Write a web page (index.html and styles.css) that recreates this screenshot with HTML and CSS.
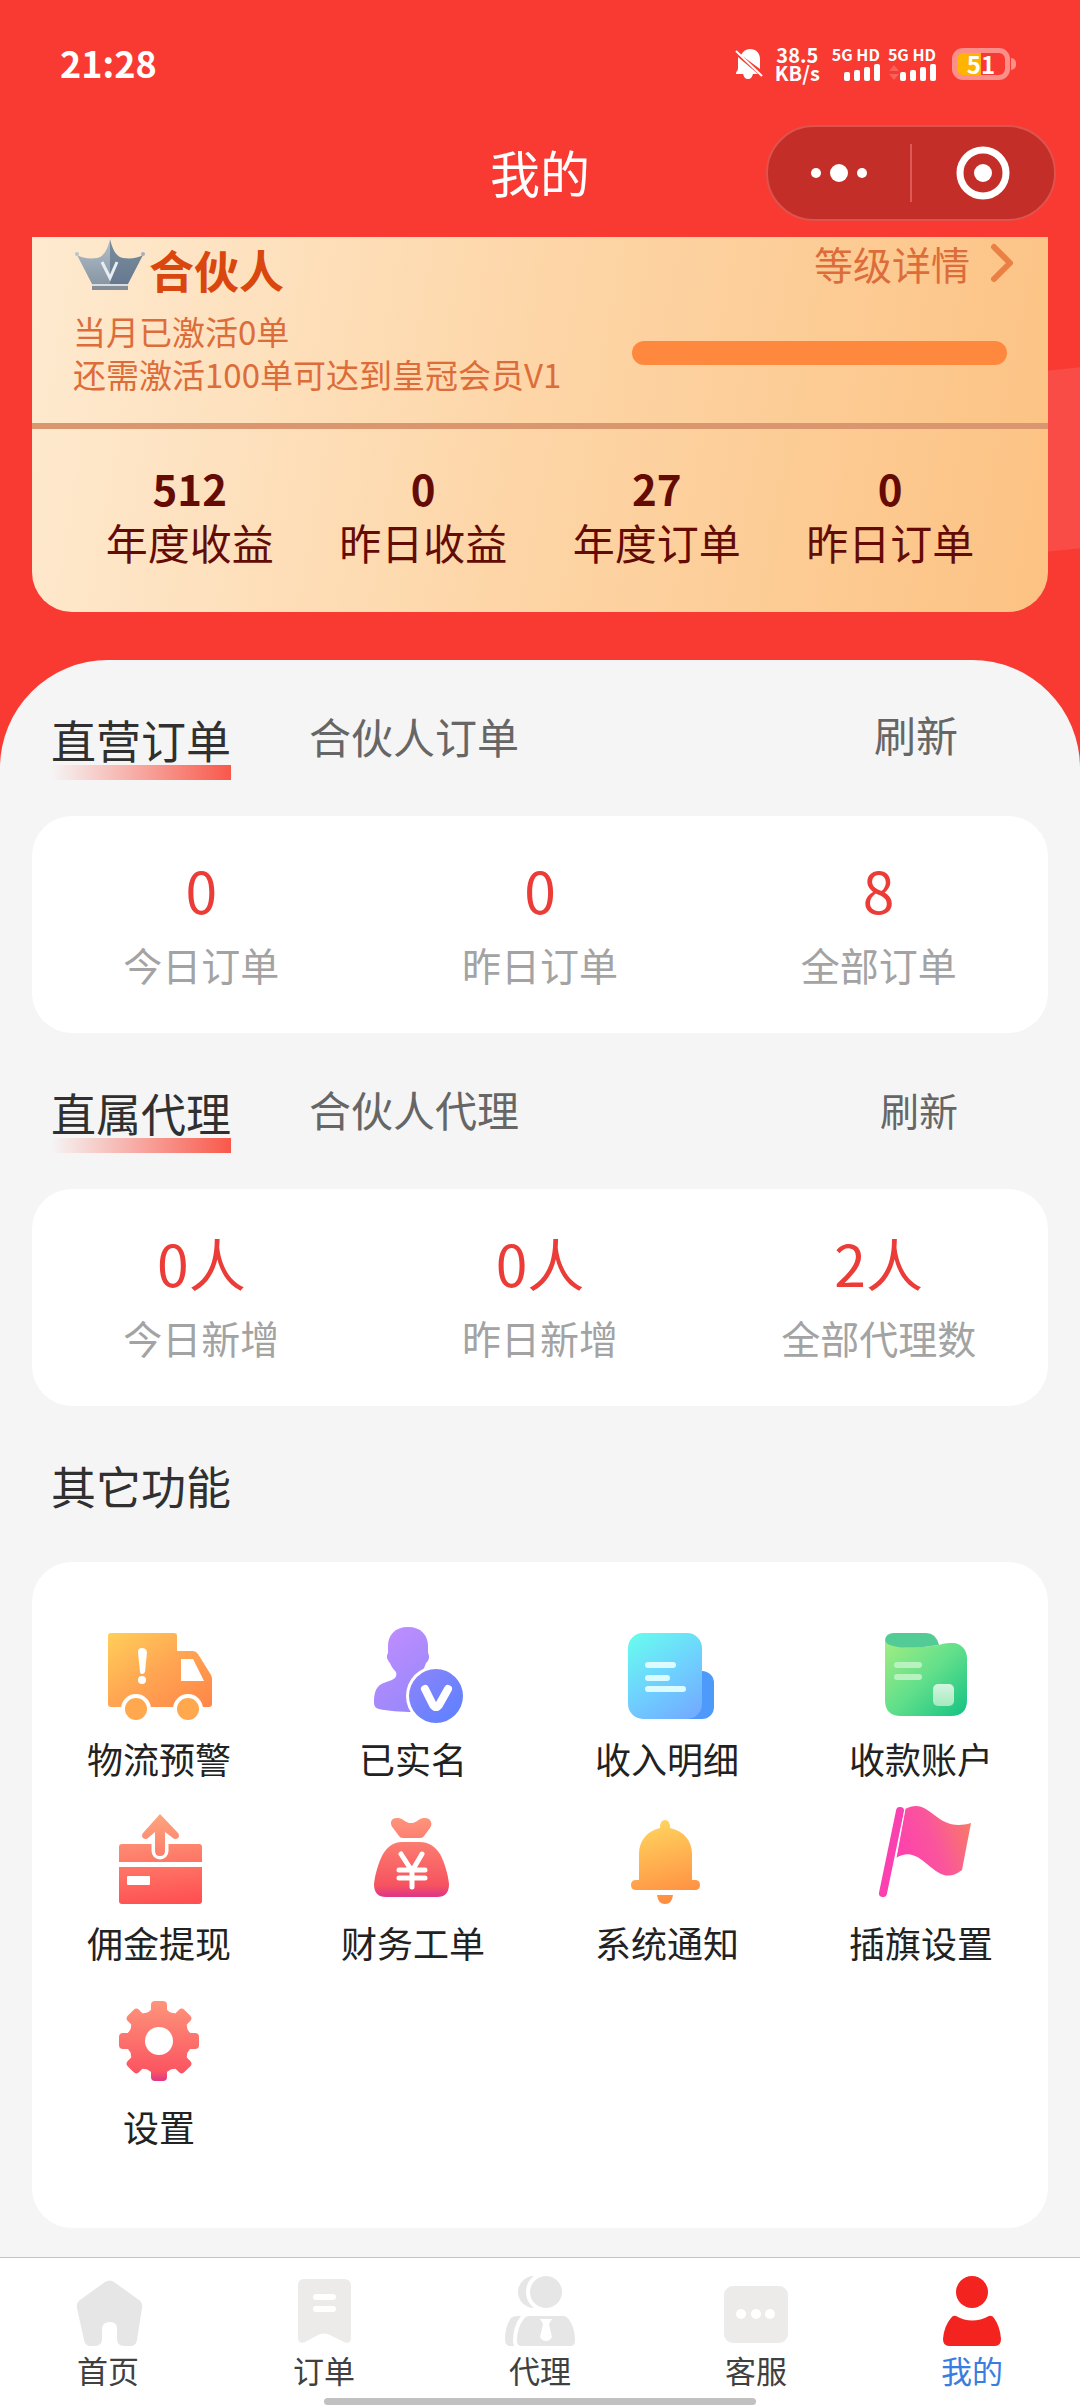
FILE: index.html
```html
<!DOCTYPE html>
<html lang="zh-CN">
<head>
	<meta charset="UTF-8">
	<meta name="viewport" content="width=device-width, initial-scale=1">
	<title>我的</title>
	<link rel="stylesheet" href="styles.css">
</head>
<body>
<div class="page">
	<header class="top">
		<div class="status">
			<span class="time">21:28</span>
			<div class="status-right">
				<svg class="mute" width="28" height="32" viewBox="0 0 28 32">
					<path d="M6 7C8 3 11 1 15 1c6 0 10 4 10 10v10zM3 9l20 17h-5c-1 3-2 5-5 5s-4-2-5-5H1c0-3 2-3 2-6z" fill="#fff"/>
					<path d="M1 3l26 25" stroke="#fff" stroke-width="2"/>
				</svg>
				<div class="speed"><span>38.5</span><span>KB/s</span></div>
				<div class="signal">
					<span>5G HD</span>
					<svg width="36" height="17" viewBox="0 0 36 17" fill="#fff">
						<rect x="0" y="8" width="6" height="9" rx="2"/><rect x="10" y="6" width="6" height="11" rx="2"/>
						<rect x="20" y="3" width="6" height="14" rx="2"/><rect x="30" y="0" width="6" height="17" rx="2"/>
					</svg>
				</div>
				<div class="signal">
					<span>5G HD</span>
					<svg width="48" height="17" viewBox="0 0 48 17" fill="#fff">
						<path d="M1 7l5-6 5 6zM1 10h10l-5 6z" opacity=".2"/>
						<rect x="12" y="8" width="6" height="9" rx="2"/><rect x="22" y="6" width="6" height="11" rx="2"/>
						<rect x="32" y="3" width="6" height="14" rx="2"/><rect x="42" y="0" width="6" height="17" rx="2"/>
					</svg>
				</div>
				<div class="battery"><span>51</span></div>
			</div>
		</div>
		<div class="nav">
			<h1>我的</h1>
			<div class="capsule">
				<button type="button" aria-label="更多">
					<svg width="58" height="20" viewBox="0 0 58 20" fill="#fff"><circle cx="6" cy="10" r="5"/><circle cx="29" cy="10" r="9"/><circle cx="52" cy="10" r="5"/></svg>
				</button>
				<button type="button" aria-label="关闭">
					<svg width="54" height="54" viewBox="0 0 54 54"><circle cx="27" cy="27" r="23" fill="none" stroke="#fff" stroke-width="7"/><circle cx="27" cy="27" r="9" fill="#fff"/></svg>
				</button>
			</div>
		</div>
	</header>

	<section class="level">
		<div class="level-top">
			<div class="level-info">
				<div class="level-name">
					<svg width="70" height="54" viewBox="0 0 70 54">
						<defs>
							<linearGradient id="cl" x1="0" y1="0" x2="0" y2="1"><stop offset="0" stop-color="#b3c0ca"/><stop offset="1" stop-color="#8896a5"/></linearGradient>
							<linearGradient id="cr" x1="0" y1="0" x2="0" y2="1"><stop offset="0" stop-color="#7a8da0"/><stop offset="1" stop-color="#66798e"/></linearGradient>
						</defs>
						<path d="M35 0C33 9 29 18 22 19 14 20 7 19 2 16L17 45H35z" fill="url(#cl)"/>
						<path d="M35 0c2 9 6 18 13 19 8 1 15 0 20-3L53 45H35z" fill="url(#cr)"/>
						<circle cx="2" cy="15" r="2" fill="#bac3cb"/><circle cx="68" cy="15" r="2" fill="#a5b0bb"/>
						<path d="M27 23l8 16 7-16" fill="none" stroke="#e9edf2" stroke-width="3"/>
						<path d="M17 46h36" stroke="#d9dde0" stroke-width="2"/><path d="M17 49h36" stroke="#858d96" stroke-width="4"/>
					</svg>
					<strong>合伙人</strong>
				</div>
				<p>当月已激活0单</p>
				<p>还需激活100单可达到皇冠会员V1</p>
			</div>
			<div class="level-side">
				<a href="#" class="level-link">等级详情
					<svg width="24" height="40" viewBox="0 0 24 40"><path d="M4 4l16 16L4 36" fill="none" stroke="#ea8044" stroke-width="6" stroke-linecap="round" stroke-linejoin="round"/></svg>
				</a>
				<progress class="bar" value="0" max="100" aria-label="激活进度"></progress>
			</div>
		</div>
		<ul class="income">
			<li><b>512</b><span>年度收益</span></li>
			<li><b>0</b><span>昨日收益</span></li>
			<li><b>27</b><span>年度订单</span></li>
			<li><b>0</b><span>昨日订单</span></li>
		</ul>
	</section>

	<main class="main">
		<div class="head">
			<button type="button" class="tab on">直营订单</button>
			<button type="button" class="tab">合伙人订单</button>
			<button type="button" class="refresh">刷新</button>
		</div>
		<ul class="card count">
			<li><b>0</b><span>今日订单</span></li>
			<li><b>0</b><span>昨日订单</span></li>
			<li><b>8</b><span>全部订单</span></li>
		</ul>

		<div class="head">
			<button type="button" class="tab on">直属代理</button>
			<button type="button" class="tab">合伙人代理</button>
			<button type="button" class="refresh small">刷新</button>
		</div>
		<ul class="card count">
			<li><b>0人</b><span>今日新增</span></li>
			<li><b>0人</b><span>昨日新增</span></li>
			<li><b>2人</b><span>全部代理数</span></li>
		</ul>

		<div class="head"><h2>其它功能</h2></div>
		<nav class="card menu">
			<a href="#">
				<svg viewBox="0 0 108 108">
					<defs><linearGradient id="g1" x1="0" y1="0" x2="1" y2="1"><stop offset="0" stop-color="#ffcf59"/><stop offset=".5" stop-color="#ffa552"/><stop offset="1" stop-color="#ff8548"/></linearGradient></defs>
					<path d="M6 13h63q3 0 3 3v15h16q3 0 5 3l13 21q1 2 1 4v25q0 3-3 3H6q-3 0-3-3V16q0-3 3-3z" fill="url(#g1)"/>
					<path d="M76 39h12l11 22H76z" fill="#fff"/>
					<circle cx="31" cy="89" r="15" fill="#fff"/><circle cx="83" cy="89" r="15" fill="#fff"/>
					<circle cx="31" cy="89" r="11" fill="#ffa84e"/><circle cx="83" cy="89" r="11" fill="#ffa84e"/>
					<path d="M33 32q0-4 4-4t5 4l-2 20q-1 2-3 2t-2-2z" fill="#fff"/><circle cx="37" cy="60" r="4" fill="#fff"/>
				</svg>
				<span>物流预警</span>
			</a>
			<a href="#">
				<svg viewBox="0 0 108 108">
					<defs>
						<linearGradient id="g2" x1="0" y1="0" x2=".5" y2="1"><stop offset="0" stop-color="#c38eff"/><stop offset="1" stop-color="#9b88fb"/></linearGradient>
						<linearGradient id="g3" x1="0" y1="0" x2="1" y2="1"><stop offset="0" stop-color="#8e85fb"/><stop offset="1" stop-color="#5a80ff"/></linearGradient>
					</defs>
					<path d="M49 7c13 0 20 8 20 19v7c2 3 1 8-2 10-2 6-4 9-6 12v32q0 5-6 5c-14 0-26-1-35-3q-5-1-5-6c0-19 8-19 15-22 7-2 8-5 7-9-3-3-5-6-6-9-3-3-4-7-2-10v-7C29 15 36 7 49 7z" fill="url(#g2)"/>
					<circle cx="77" cy="76" r="30" fill="#fff"/><circle cx="77" cy="76" r="27" fill="url(#g3)"/>
					<path d="M66 69l8 16q3 4 6 0l9-16" fill="none" stroke="#fff" stroke-width="8" stroke-linecap="round"/>
				</svg>
				<span>已实名</span>
			</a>
			<a href="#">
				<svg viewBox="0 0 108 108">
					<defs><linearGradient id="g4" x1=".2" y1="0" x2=".8" y2="1"><stop offset="0" stop-color="#68f8f0"/><stop offset=".55" stop-color="#6fceff"/><stop offset="1" stop-color="#72adff"/></linearGradient></defs>
					<rect x="62" y="51" width="39" height="48" rx="12" fill="#4d9afb"/>
					<rect x="15" y="13" width="74" height="86" rx="15" fill="url(#g4)"/>
					<path d="M35 45h25M35 58h19M35 69h35" stroke="#dcfbff" stroke-width="6" stroke-linecap="round"/>
				</svg>
				<span>收入明细</span>
			</a>
			<a href="#">
				<svg viewBox="0 0 108 108">
					<defs>
						<linearGradient id="g5" x1="0" y1="0" x2="1" y2="1"><stop offset="0" stop-color="#a2ee82"/><stop offset=".5" stop-color="#62df8b"/><stop offset="1" stop-color="#13c284"/></linearGradient>
						<linearGradient id="g6" x1="0" y1="0" x2="0" y2="1"><stop offset="0" stop-color="#d2f6df"/><stop offset="1" stop-color="#a6e9c0"/></linearGradient>
					</defs>
					<path d="M18 20c3 8 27 9 54 5 6-2 10-2 14-2 8 0 14 7 14 15v42q0 16-16 16H34q-16 0-16-16z" fill="url(#g5)"/>
					<path d="M18 20q1-7 9-7h32q10 0 13 12c-27 4-53 4-54-5z" fill="#53cb94"/>
					<path d="M30 45h22M30 57h22" stroke="#b8f3bf" stroke-width="6" stroke-linecap="round"/>
					<rect x="66" y="64" width="21" height="22" rx="5" fill="url(#g6)"/>
				</svg>
				<span>收款账户</span>
			</a>
			<a href="#">
				<svg viewBox="0 0 108 108">
					<defs><linearGradient id="g7" gradientUnits="userSpaceOnUse" x1="50" y1="10" x2="60" y2="100"><stop offset="0" stop-color="#fda67f"/><stop offset="1" stop-color="#ff5052"/></linearGradient></defs>
					<path d="M17 40h77q3 0 3 3v15H14V43q0-3 3-3zM14 63h83v34q0 3-3 3H17q-3 0-3-3z" fill="url(#g7)"/>
					<path d="M55 38v9" stroke="#fff" stroke-width="17" stroke-linecap="round"/>
					<path d="M55 10l18 19q2 3 0 5-3 2-5 0l-8-6v19q0 5-5 5t-5-5V28l-7 6q-2 2-5 0-2-2 0-5z" fill="url(#g7)"/>
					<rect x="22" y="72" width="23" height="9" rx="1" fill="#fff"/>
				</svg>
				<span>佣金提现</span>
			</a>
			<a href="#">
				<svg viewBox="0 0 108 108">
					<defs><linearGradient id="g8" gradientUnits="userSpaceOnUse" x1="54" y1="13" x2="54" y2="93"><stop offset="0" stop-color="#fe957b"/><stop offset=".85" stop-color="#f7535f"/><stop offset="1" stop-color="#dd3488"/></linearGradient></defs>
					<path d="M38 14c5-1 8 5 14 5s9-6 14-5c6 0 8 6 5 10l-6 8q-1 2-4 2H44q-3 0-4-2l-6-8c-4-5-2-10 4-10z" fill="url(#g8)"/>
					<path d="M43 38h18c8 0 15 4 20 12 4 7 8 20 9 30q0 13-12 13H27q-12 0-12-13c1-10 5-23 9-30 5-8 11-12 19-12z" fill="url(#g8)"/>
					<path d="M42 50l11 17 10-17M53 66v17M40 66h26M40 74h26" fill="none" stroke="#fff" stroke-width="5" stroke-linecap="round"/>
				</svg>
				<span>财务工单</span>
			</a>
			<a href="#">
				<svg viewBox="0 0 108 108">
					<defs><linearGradient id="g9" gradientUnits="userSpaceOnUse" x1="40" y1="16" x2="62" y2="100"><stop offset="0" stop-color="#ffd55f"/><stop offset="1" stop-color="#ff8a40"/></linearGradient></defs>
					<path d="M52 16q5 0 5 8c14 3 22 13 22 26v26h3q5 0 5 5t-5 5H23q-5 0-5-5t5-5h3V50c0-13 8-23 21-26q0-8 5-8zM44 91h16q-1 9-8 9t-8-9z" fill="url(#g9)"/>
				</svg>
				<span>系统通知</span>
			</a>
			<a href="#">
				<svg viewBox="0 0 108 108">
					<defs><linearGradient id="g10" x1="0" y1=".6" x2="1" y2=".25"><stop offset="0" stop-color="#fe40ae"/><stop offset=".5" stop-color="#fa569b"/><stop offset="1" stop-color="#f97a66"/></linearGradient></defs>
					<path d="M33 7L16 89" stroke="#fb40b0" stroke-width="8" stroke-linecap="round"/>
					<path d="M38 5C64-9 68 30 104 19L95 66C68 88 56 36 29 54z" fill="url(#g10)"/>
					<path d="M38 5L29 54" stroke="#fff"/>
				</svg>
				<span>插旗设置</span>
			</a>
			<a href="#">
				<svg viewBox="0 0 108 108">
					<defs>
						<linearGradient id="g11" x1="0" y1="0" x2="0" y2="1"><stop offset="0" stop-color="#fe957b"/><stop offset=".88" stop-color="#fb5561"/><stop offset="1" stop-color="#df3788"/></linearGradient>
						<mask id="gear">
							<g fill="#fff">
								<circle cx="54" cy="53" r="32"/>
								<rect x="46" y="13" width="16" height="80" rx="4"/>
								<rect x="46" y="13" width="16" height="80" rx="4" transform="rotate(45 54 53)"/>
								<rect x="46" y="13" width="16" height="80" rx="4" transform="rotate(90 54 53)"/>
								<rect x="46" y="13" width="16" height="80" rx="4" transform="rotate(135 54 53)"/>
							</g>
							<!-- 齿间的圆弧凹槽 -->
							<g>
								<circle cx="68" cy="19" r="6"/>
								<circle cx="88" cy="39" r="6"/>
								<circle cx="88" cy="67" r="6"/>
								<circle cx="68" cy="87" r="6"/>
								<circle cx="40" cy="87" r="6"/>
								<circle cx="20" cy="67" r="6"/>
								<circle cx="20" cy="39" r="6"/>
								<circle cx="40" cy="19" r="6"/>
								<circle cx="54" cy="53" r="14"/>
							</g>
						</mask>
					</defs>
					<rect x="14" y="13" width="80" height="80" fill="url(#g11)" mask="url(#gear)"/>
				</svg>
				<span>设置</span>
			</a>
		</nav>
	</main>

	<nav class="tabbar">
		<a href="#">
			<svg viewBox="0 0 72 72" fill="#e6e6e6"><path d="M33 7q5-3 9 0l25 18q4 3 3 8l-5 32q-1 6-7 6h-6q-7 0-7-7V54q0-7-7-7-8 0-8 7v10q0 7-7 7h-4q-6 0-7-6L5 33q-1-5 3-8z"/></svg>
			<span>首页</span>
		</a>
		<a href="#">
			<svg viewBox="0 0 72 72" fill="#ecebea"><path d="M16 4h40q7 0 7 7v51q0 8-7 5l-14-7q-6-3-12 0l-13 7q-7 3-7-5V11q0-7 6-7z"/><path d="M28 22h17M28 34h17" stroke="#fff" stroke-width="6" stroke-linecap="round"/></svg>
			<span>订单</span>
		</a>
		<a href="#">
			<svg viewBox="0 0 72 72" fill="#e6e6e6">
				<circle cx="30" cy="17" r="16"/><path d="M13 41h14v30H7q-6 0-6-6 0-14 6-22 2-2 6-2z"/>
				<circle cx="42" cy="17" r="18" stroke="#fff" stroke-width="4"/>
				<path d="M25 39h34q5 0 8 5 6 8 6 22 0 7-7 7H18q-7 0-7-7 0-14 7-23 3-4 7-4z" stroke="#fff" stroke-width="4"/>
				<path d="M36 44h12l-3 5 3 13q-2 4-6 4t-6-4l3-13z" fill="#fff"/>
			</svg>
			<span>代理</span>
		</a>
		<a href="#">
			<svg viewBox="0 0 72 72" fill="#ecebea"><rect x="4" y="11" width="64" height="57" rx="9"/><g fill="#fff"><circle cx="21" cy="39" r="5"/><circle cx="36" cy="39" r="5"/><circle cx="50" cy="39" r="5"/></g></svg>
			<span>客服</span>
		</a>
		<a href="#" class="active">
			<svg viewBox="0 0 72 72" fill="#f3231f"><circle cx="36" cy="17" r="16"/><path d="M20 41q16 9 33 0 3-1 5 2 6 8 7 21 0 7-6 7H13q-6 0-6-7 1-13 8-21 2-3 5-2z"/></svg>
			<span>我的</span>
		</a>
	</nav>
</div>
</body>
</html>
```
FILE: styles.css
```css
*{
	box-sizing: border-box;
	margin: 0;
	padding: 0;
}
body{
	background: #f5f5f5;
	color: #222;
	font-family: "Noto Sans CJK SC", "Noto Sans", sans-serif;
}
ul{
	list-style: none;
}
a{
	color: inherit;
	text-decoration: none;
}
button{
	border: 0;
	background: none;
	color: inherit;
	font: inherit;
	cursor: pointer;
}
svg{
	display: block;
}
.page{
	position: relative;
	display: flex;
	flex-direction: column;
	min-height: 100vh;
	background: linear-gradient(#f83a32, #f83a32) no-repeat 0 0 / 100% 800px;
	overflow-x: clip;
}
/* 背景上的浅色色块 */
.page::before{
	content: "";
	position: absolute;
	top: 374px;
	right: -60px;
	width: 240px;
	height: 180px;
	border-radius: 40px;
	background: #f94c46;
	transform: rotate(-6deg);
}

/* 状态栏 */
.status{
	display: flex;
	justify-content: space-between;
	align-items: center;
	height: 124px;
	padding: 4px 64px 0 60px;
	color: #fff;
	font-weight: 700;
}
.time{
	padding-bottom: 4px;
	font-size: 36px;
}
.status-right{
	display: flex;
	align-items: center;
	gap: 12px;
}
.speed{
	display: flex;
	flex-direction: column;
	align-items: center;
	font-size: 20px;
	line-height: 18px;
}
.signal{
	display: flex;
	flex-direction: column;
	align-items: flex-end;
	gap: 3px;
	font-size: 16px;
	line-height: 14px;
}
.signal + .signal{
	margin-left: -4px;
}
.battery{
	position: relative;
	display: flex;
	justify-content: center;
	align-items: center;
	width: 58px;
	height: 32px;
	margin: 0 6px 0 4px;
	border: 5px solid #fc8f8a;
	border-radius: 11px;
	background: linear-gradient(90deg, #ffb400 51%, transparent 51%);
	font-size: 24px;
	line-height: 22px;
}
.battery::after{
	content: "";
	position: absolute;
	right: -11px;
	top: 5px;
	width: 5px;
	height: 12px;
	border-radius: 0 6px 6px 0;
	background: #fc8f8a;
}

/* 导航 */
.nav{
	display: grid;
	grid-template-columns: 1fr auto 1fr;
	align-items: center;
	height: 97px;
}
.nav h1{
	grid-column: 2;
	padding-bottom: 4px;
	color: #fff;
	font-size: 50px;
	font-weight: 400;
	line-height: 92px;
}
.capsule{
	display: flex;
	align-items: center;
	justify-self: end;
	width: 290px;
	height: 96px;
	margin-right: 24px;
	border: 2px solid #e0524c;
	border-radius: 48px;
	background: #c32f28;
}
.capsule button{
	display: flex;
	flex: 1;
	justify-content: center;
	align-items: center;
	height: 58px;
}
.capsule button + button{
	border-left: 2px solid #df5a54;
}

/* 等级卡片 */
.level{
	position: relative;
	margin: 16px 32px 48px;
	border-radius: 0 0 40px 40px;
	background: linear-gradient(100deg, #feead0, #fdd5a6 50%, #fcc283);
}
.level-top{
	display: flex;
	justify-content: space-between;
	padding: 0 34px 27px 41px;
	border-bottom: 6px solid #da966f;
	color: #dc6d3a;
}
.level-name{
	display: flex;
	align-items: flex-start;
	gap: 4px;
	height: 65px;
	margin-bottom: 8px;
	color: #d9470f;
	font-size: 45px;
	line-height: 66px;
}
.level-name svg{
	margin: 2px 0 0 2px;
}
.level-info p{
	font-size: 33px;
	line-height: 43px;
}
.level-side{
	display: flex;
	flex-direction: column;
	align-items: flex-end;
	width: 382px;
}
.level-link{
	display: flex;
	align-items: center;
	gap: 20px;
	font-size: 39px;
	line-height: 52px;
}
.bar{
	appearance: none;
	width: 375px;
	height: 24px;
	margin: 52px 7px 0 0;
	border: 0;
	border-radius: 12px;
	background: #ff883f;
	overflow: hidden;
}
.bar::-webkit-progress-bar{
	background: #ff883f;
}
.bar::-webkit-progress-value{
	background: #d9470f;
}
.income{
	display: flex;
	padding: 32px 41px 43px;
	color: #650b05;
	text-align: center;
}
.income li{
	display: flex;
	flex: 1;
	flex-direction: column;
}
.income b{
	font-size: 42px;
	font-weight: 700;
	line-height: 54px;
}
.income span{
	font-size: 42px;
	line-height: 54px;
}

/* 内容区 */
.main{
	position: relative;
	flex: 1;
	padding: 0 32px 29px;
	border-radius: 108px 108px 0 0;
	background: #f5f5f5;
}
.head{
	display: flex;
	align-items: flex-start;
	padding: 48px 90px 36px 19px;
}
.head h2,
.tab.on{
	padding-bottom: 8px;
	color: #303030;
	font-size: 45px;
	font-weight: 400;
	line-height: 64px;
}
.tab{
	margin-right: 78px;
	color: #666;
	font-size: 42px;
	line-height: 56px;
}
.tab.on{
	background: linear-gradient(90deg, #f5f5f5, #f9584a) no-repeat 0 100% / 100% 15px;
}
.refresh{
	margin-left: auto;
	color: #666;
	font-size: 42px;
	line-height: 52px;
}
.refresh.small{
	font-size: 39px;
	line-height: 56px;
}
.card{
	border-radius: 40px;
	background: #fff;
}
.count{
	display: flex;
	padding: 33px 0;
	text-align: center;
}
.count li{
	display: flex;
	flex: 1;
	flex-direction: column;
}
.count b{
	color: #eb3c37;
	font-size: 57px;
	font-weight: 400;
	line-height: 80px;
}
.count span{
	color: #a3a3a3;
	font-size: 39px;
	line-height: 71px;
}
.menu{
	display: grid;
	grid-template-columns: repeat(4, 1fr);
	row-gap: 16px;
	padding: 58px 0 72px;
}
.menu a{
	display: flex;
	flex-direction: column;
	align-items: center;
	font-size: 36px;
	line-height: 60px;
}
.menu svg{
	width: 108px;
	height: 108px;
}

/* 底部标签栏 */
.tabbar{
	position: sticky;
	bottom: 0;
	display: flex;
	padding: 17px 0 15px;
	border-top: 1px solid #c4c4c4;
	background: #fff;
	color: #404040;
}
.tabbar a{
	display: flex;
	flex: 1;
	flex-direction: column;
	align-items: center;
	font-size: 31px;
	line-height: 46px;
}
.tabbar svg{
	width: 72px;
	height: 72px;
}
.tabbar .active{
	color: #3a7de0;
}
.tabbar::after{
	content: "";
	position: absolute;
	bottom: 3px;
	left: 30%;
	width: 40%;
	height: 7px;
	border-radius: 4px;
	background: #c1c1c1;
}
```
